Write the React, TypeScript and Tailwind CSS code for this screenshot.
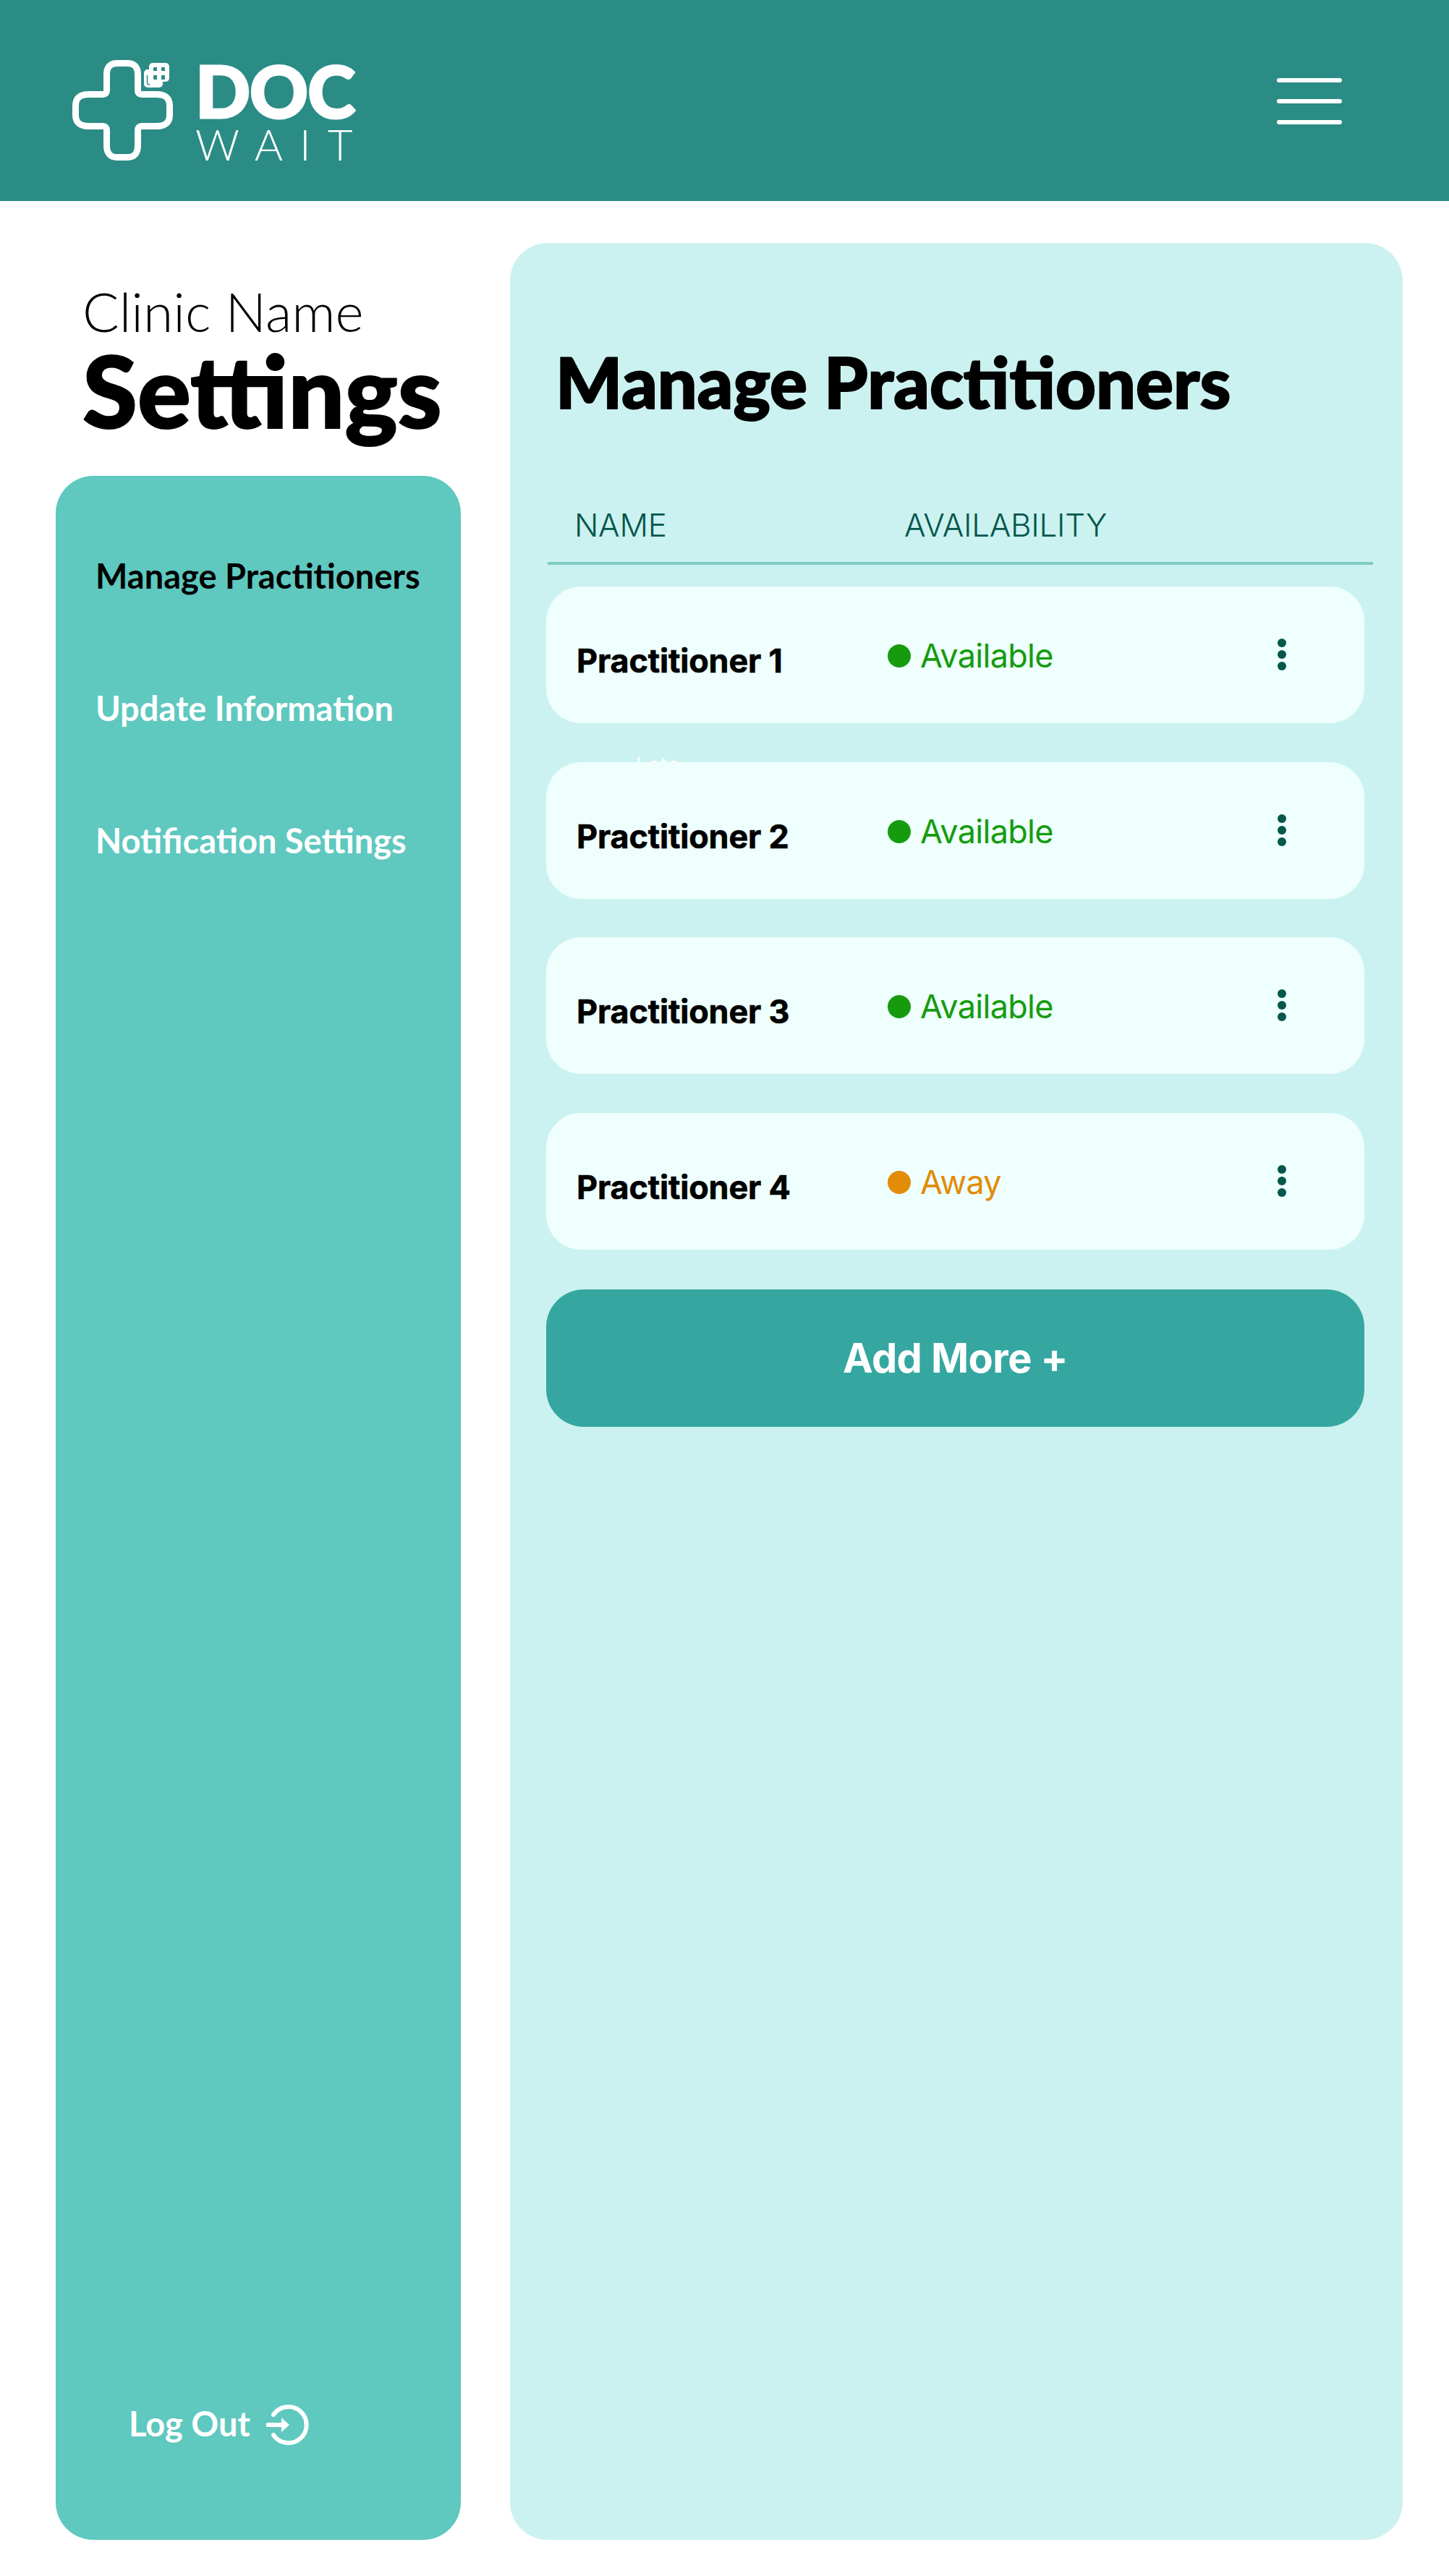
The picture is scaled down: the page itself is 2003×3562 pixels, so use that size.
import React from "react";

const futura = "font-['Lato','Noto_Sans',sans-serif]";
const inter = "font-['Inter','Liberation_Sans',sans-serif]";

function Logo() {
  return (
    <div className="flex items-start">
      <svg width="139" height="139" viewBox="0 0 139 139" className="mt-[83px] shrink-0" fill="none">
        <path
          d="M62 4.5H76Q90.5 4.5 90.5 20V42Q90.5 47.5 96 47.5H116.5Q134.5 47.5 134.5 63V76Q134.5 91.5 116.5 91.5H96Q90.5 91.5 90.5 97V118Q90.5 134.5 76 134.5H62Q47.5 134.5 47.5 118V97Q47.5 91.5 42 91.5H22.5Q4.5 91.5 4.5 76V63Q4.5 47.5 22.5 47.5H42Q47.5 47.5 47.5 42V20Q47.5 4.5 62 4.5Z"
          stroke="#fff"
          strokeWidth="9"
        />
        <rect x="99" y="13" width="26" height="25" rx="5" fill="#fff" />
        <path d="M103.500 21V31Q103.500 34 107 34" stroke="#2a8c85" strokeWidth="1.500" />
        <rect x="106" y="4" width="28" height="26" rx="5" fill="#fff" />
        <rect x="112" y="10" width="16" height="17" rx="1" fill="#2a8c85" />
        <path d="M117 9h6v6h6v6h-6v7h-6v-7h-6v-6h6Z" fill="#fff" />
      </svg>
      <div className="ml-[31px] mt-[76px] text-white">
        <div className={`${futura} h-[96px] text-[100px] leading-[96px] font-black tracking-[-1px] [-webkit-text-stroke:3px_#fff]`}>DOC</div>
        <div className={`${futura} h-[54px] text-[60px] leading-[54px] font-light tracking-[23px]`}>WAIT</div>
      </div>
    </div>
  );
}

function Kebab() {
  return (
    <div className="flex flex-col gap-1">
      <span className="size-3 rounded-full bg-[#05574d]" />
      <span className="size-3 rounded-full bg-[#05574d]" />
      <span className="size-3 rounded-full bg-[#05574d]" />
    </div>
  );
}

function Row({ name, status, away, late }: { name: string; status: string; away?: boolean; late?: boolean }) {
  return (
    <div className="relative h-[189px] w-[1131px]">
      {late && (
        <span className={`${inter} absolute left-[124px] top-[-14px] text-[30px] leading-[36px] text-white`}>Late</span>
      )}
      <div className="relative flex h-full items-start rounded-[48px] bg-[#eefffd]">
        <div className={`${inter} ml-[42px] mt-[76px] w-[430px] text-[45px] leading-[54px] font-bold tracking-[-0.2px] text-black [-webkit-text-stroke:0.6px_#000]`}>
          {name}
        </div>
        <div className="flex w-[539px] items-start">
          <span className={`mt-[80px] size-8 rounded-full ${away ? "bg-[#e28c07]" : "bg-[#169b0f]"}`} />
          <span className={`${inter} ml-[13px] mt-[69px] text-[45px] leading-[54px] tracking-[-0.7px] ${away ? "text-[#e28c07]" : "text-[#169b0f]"}`}>
            {status}
          </span>
        </div>
        <div className="mt-[72px]">
          <Kebab />
        </div>
      </div>
    </div>
  );
}

function NavItem({ label, active }: { label: string; active?: boolean }) {
  return (
    <div className={`${futura} h-[183px] text-[47px] leading-[56px] font-bold ${active ? "text-black" : "text-white"}`}>{label}</div>
  );
}

export default function App() {
  return (
    <div className="h-[3562px] w-[2003px] bg-white">
      <header className="flex h-[278px] items-start justify-between bg-[#2a8c85] pl-[100px] pr-[148px]">
        <Logo />
        <div className="mt-[108px] flex w-[90px] flex-col gap-[23px]">
          <span className="h-1.5 rounded-full bg-white" />
          <span className="h-1.5 rounded-full bg-white" />
          <span className="h-1.5 rounded-full bg-white" />
        </div>
      </header>
      <div className="flex h-[3284px] pb-[50px] pl-[77px] pr-[64px] pt-[58px]">
        <div className="flex w-[560px] flex-col">
          <div className="pl-[37px] pt-[59px] text-black">
            <div className={`${futura} text-[75px] leading-[70px] font-light`}>Clinic Name</div>
            <div className={`${futura} mt-[5px] text-[138px] leading-[138px] font-black [-webkit-text-stroke:2px_#000]`}>Settings</div>
          </div>
          <aside className="mt-[50px] flex flex-1 flex-col justify-between rounded-[52px] bg-[#5fc8bf] pb-[129px] pl-[55px] pt-[110px]">
            <nav>
              <NavItem label="Manage Practitioners" active />
              <NavItem label="Update Information" />
              <NavItem label="Notification Settings" />
            </nav>
            <div className="flex items-center pl-[46px] text-white">
              <span className={`${futura} -mt-1 text-[47px] leading-[56px] font-bold`}>Log Out</span>
              <svg width="60" height="60" viewBox="0 0 60 60" fill="none" className="ml-[22px]">
                <path d="M10 16a25 25 0 1 1 0 28" stroke="#fff" strokeWidth="6" strokeLinecap="round" />
                <path d="M2 30h22" stroke="#fff" strokeWidth="6" strokeLinecap="round" />
                <path d="M21 20l11 10-11 10Z" fill="#fff" />
              </svg>
            </div>
          </aside>
        </div>
        <main className="ml-[68px] flex-1 rounded-[52px] bg-[#cbf2f0] pl-[50px] pt-[137px]">
          <h1 className={`${futura} ml-[13px] text-[97px] leading-[110px] font-black text-black [-webkit-text-stroke:2px_#000]`}>Manage Practitioners</h1>
          <div className={`${inter} ml-[39px] mt-[116px] flex text-[44px] font-light leading-[54px] tracking-[-0.3px] text-[#05574d]`}>
            <span className="w-[456px]">NAME</span>
            <span>AVAILABILITY</span>
          </div>
          <div className="ml-[2px] mt-[24px] h-1 w-[1141px] bg-[#7fcac1]" />
          <div className="mt-[30px] flex flex-col gap-[53.67px]">
            <Row name="Practitioner 1" status="Available" />
            <Row name="Practitioner 2" status="Available" late />
            <Row name="Practitioner 3" status="Available" />
            <Row name="Practitioner 4" status="Away" away />
          </div>
          <button className={`${inter} mt-[55px] flex h-[190px] w-[1131px] items-center justify-center rounded-[52px] bg-[#35a7a0] text-[56px] font-bold tracking-[-0.6px] text-white`}>
            Add More +
          </button>
        </main>
      </div>
    </div>
  );
}
